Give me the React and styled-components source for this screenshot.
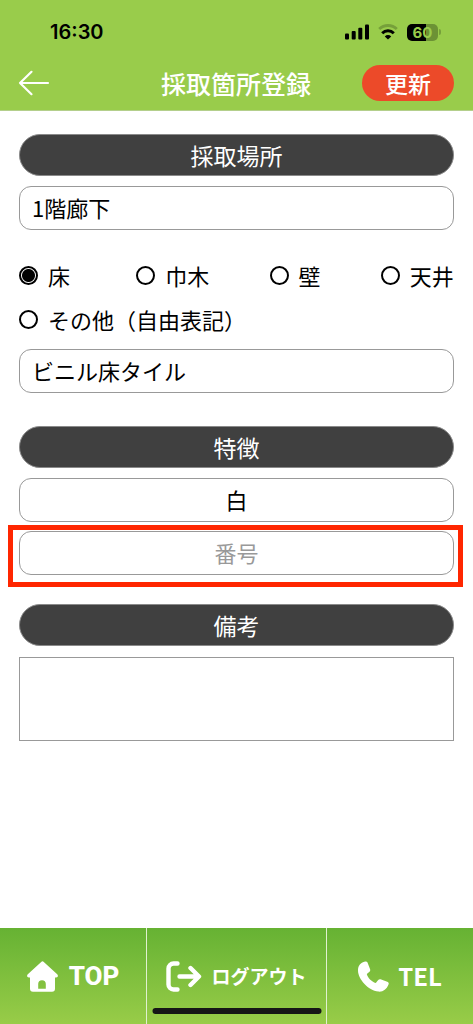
import React, { useState } from "react";
import styled, { createGlobalStyle } from "styled-components";

const PLACES = ["床", "巾木", "壁", "天井"];
const OTHER = "その他（自由表記）";

const StatusBar = () => (
  <StatusRow>
    <Clock>16:30</Clock>
    <StatusIcons>
      <svg width="24" height="16" viewBox="0 0 24 16" aria-hidden="true">
        <rect x="0" y="9.5" width="4" height="6" rx="1" />
        <rect x="6.7" y="7" width="4" height="8.5" rx="1" />
        <rect x="13.3" y="3.7" width="4" height="11.8" rx="1" />
        <rect x="20" y="0.4" width="4" height="15.1" rx="1" />
      </svg>
      <svg width="20" height="16" viewBox="0 0 20 16" aria-hidden="true">
        <path
          d="M1.2 5.1a12.6 12.6 0 0 1 17.6 0"
          fill="none"
          stroke="#76a03a"
          strokeWidth="2.8"
        />
        <path
          d="M4.2 9.2a8.3 8.3 0 0 1 11.6 0"
          fill="none"
          stroke="#000"
          strokeWidth="3"
        />
        <path d="M10 15.6 6.8 12.4a4.6 4.6 0 0 1 6.4 0z" />
      </svg>
      <BatteryWrap>
        <Battery>60</Battery>
        <BatteryTip />
      </BatteryWrap>
    </StatusIcons>
  </StatusRow>
);

const App = () => {
  const [place, setPlace] = useState("床");

  return (
    <Page>
      <GlobalStyle />
      <Header>
        <StatusBar />
        <NavRow>
          <BackButton type="button" aria-label="戻る">
            <svg width="32" height="26" viewBox="0 0 32 26" aria-hidden="true">
              <path
                d="M30 13H2M13.5 1.8 2 13l11.5 11.2"
                fill="none"
                stroke="#fff"
                strokeWidth="2.2"
                strokeLinecap="round"
                strokeLinejoin="round"
              />
            </svg>
          </BackButton>
          <Title>採取箇所登録</Title>
          <UpdateButton type="submit" form="place-form">
            更新
          </UpdateButton>
        </NavRow>
      </Header>

      <Form id="place-form" onSubmit={(e) => e.preventDefault()}>
        <Section>
          <Heading>採取場所</Heading>
          <TextInput aria-label="採取場所" defaultValue="1階廊下" />
          <Options role="radiogroup" aria-label="部位">
            {PLACES.map((name) => (
              <Option key={name}>
                <Radio
                  name="place"
                  checked={place === name}
                  onChange={() => setPlace(name)}
                />
                {name}
              </Option>
            ))}
            <Option $wide>
              <Radio
                name="place"
                checked={place === OTHER}
                onChange={() => setPlace(OTHER)}
              />
              {OTHER}
            </Option>
          </Options>
          <TextInput aria-label="自由表記" defaultValue="ビニル床タイル" />
        </Section>

        <Section>
          <Heading>特徴</Heading>
          <FieldGroup>
            <TextInput $center aria-label="特徴" defaultValue="白" />
            <Highlight>
              <TextInput $center aria-label="番号" placeholder="番号" />
            </Highlight>
          </FieldGroup>
        </Section>

        <NoteSection>
          <Heading as="label" htmlFor="note">
            備考
          </Heading>
          <NoteArea id="note" />
        </NoteSection>
      </Form>

      <Footer>
        <TopLink href="#top">
          <svg width="31" height="31" viewBox="0 0 31 31" aria-hidden="true">
            <path
              fill="#fff"
              fillRule="evenodd"
              d="M14.2.9a2 2 0 0 1 2.6 0L30.2 13.2c1.3 1.3.7 3.2-1.1 3.2H28v11.4a3 3 0 0 1-3 3H6a3 3 0 0 1-3-3V16.4H1.9C.1 16.4-.5 14.5.8 13.2zM11.2 27.8h7.6v-4.800a3.800 3.800 0 0 0-7.600 0z"
            />
          </svg>
          TOP
        </TopLink>
        <FooterItem as="button" type="button" $size={19}>
          <svg width="36" height="31" viewBox="0 0 36 31" aria-hidden="true">
            <path
              d="M11.5 2.5H7.5a5 5 0 0 0-5 5v16a5 5 0 0 0 5 5h4M13.5 15.5h18M24.5 7l8.5 8.5-8.5 8.5"
              fill="none"
              stroke="#fff"
              strokeWidth="4.4"
              strokeLinecap="round"
              strokeLinejoin="round"
            />
          </svg>
          ログアウト
        </FooterItem>
        <FooterItem href="#tel" $size={24}>
          <svg width="31" height="31" viewBox="0 0 31 31" aria-hidden="true">
            <path
              fill="#fff"
              d="M5 1.2C6.5.2 8.700 0 9.500 1.500L12 8c.5 1.300.2 2.200-.8 3L8.800 13c.9 3.700 4.700 7.700 9 9l2-2.600c1-1.200 2-1.500 3.400-1l6 2.300c1.500.6 1.900 1.700 1.200 3.100C28.500 28.500 25 31 20.500 30.600 10 29.500 0 18 0 9.500 0 5 2 2.500 5 1.200z"
            />
          </svg>
          TEL
        </FooterItem>
        <HomeIndicator />
      </Footer>
    </Page>
  );
};

export default App;

const GlobalStyle = createGlobalStyle`
  * {
    box-sizing: border-box;
  }

  body {
    margin: 0;
    background-color: white;
  }

  body, input, button, textarea {
    font-family: "Noto Sans CJK JP", sans-serif;
  }
`;

const Page = styled.div`
  display: flex;
  flex-direction: column;
  min-height: 100vh;
`;

const Header = styled.header`
  background-color: #99cc4b;
  border-bottom: 1px solid #b4cf8c;
  padding-bottom: 8px;
`;

const StatusRow = styled.div`
  display: flex;
  align-items: center;
  justify-content: space-between;
  height: 64px;
  padding: 0 32px 0 50px;
`;

const Clock = styled.div`
  font-family: Inter, sans-serif;
  font-size: 20px;
  font-weight: 600;
`;

const StatusIcons = styled.div`
  display: flex;
  align-items: center;
  gap: 9px;
`;

const BatteryWrap = styled.div`
  display: flex;
  align-items: center;
  gap: 1px;
`;

const Battery = styled.div`
  width: 31px;
  height: 17px;
  border-radius: 5px;
  background: linear-gradient(to right, black 60%, #6c9235 60%);
  color: #99cc4b;
  font-family: Inter, sans-serif;
  font-size: 15px;
  font-weight: 700;
  line-height: 17px;
  text-align: center;
`;

const BatteryTip = styled.div`
  width: 2px;
  height: 6px;
  border-radius: 0 2px 2px 0;
  background-color: #76a03a;
`;

const NavRow = styled.div`
  display: grid;
  grid-template-columns: 1fr auto 1fr;
  align-items: center;
  padding: 0 19px 0 18px;
`;

const BackButton = styled.button`
  display: flex;
  justify-self: start;
  padding: 0;
  border: 0;
  background: none;
`;

const Title = styled.h1`
  margin: 0;
  color: white;
  font-size: 25px;
  font-weight: 500;
  line-height: 38px;
`;

const UpdateButton = styled.button`
  justify-self: end;
  width: 92px;
  height: 36px;
  padding: 0;
  border: 0;
  border-radius: 18px;
  background-color: #ec4a29;
  color: white;
  font-size: 23px;
  font-weight: 500;
  line-height: 36px;
`;

const Form = styled.form`
  display: flex;
  flex: 1;
  flex-direction: column;
  padding: 23px 19px;
`;

const Section = styled.section`
  display: flex;
  flex-direction: column;
  gap: 10px;
  margin-bottom: 33px;
`;

const NoteSection = styled(Section)`
  gap: 11px;
  margin: -4px 0 0;
`;

const Heading = styled.h2`
  margin: 0;
  border: 1px solid #8a8a8a;
  border-radius: 21px;
  background-color: #404040;
  color: white;
  font-size: 23px;
  font-weight: 400;
  line-height: 40px;
  text-align: center;
`;

const TextInput = styled.input`
  display: block;
  width: 100%;
  height: 44px;
  padding: 0 12px 2px;
  border: 1px solid #999;
  border-radius: 12px;
  background-color: white;
  color: black;
  font-size: 22px;
  text-align: ${(props) => (props.$center ? "center" : "left")};

  &::placeholder {
    color: #999;
  }
`;

const Options = styled.div`
  display: grid;
  grid-template-columns: 117fr 133fr 111fr 73fr;
  row-gap: 12px;
  padding: 19px 0 4px;
`;

const Option = styled.label`
  display: flex;
  align-items: center;
  gap: 10px;
  font-size: 22px;
  line-height: 32px;
  white-space: nowrap;
  grid-column: ${(props) => (props.$wide ? "1 / -1" : "auto")};
`;

const Radio = styled.input.attrs({ type: "radio" })`
  appearance: none;
  flex: none;
  width: 19px;
  height: 19px;
  margin: 0;
  border: 2px solid black;
  border-radius: 50%;

  &:checked {
    background: radial-gradient(circle, black 6px, white 7px);
  }
`;

const FieldGroup = styled.div`
  display: flex;
  flex-direction: column;
  gap: 9px;
`;

const Highlight = styled.div`
  position: relative;

  &::after {
    content: "";
    position: absolute;
    inset: -6px -9px -12px -11px;
    border: 5px solid #ff2600;
    pointer-events: none;
  }
`;

const NoteArea = styled.textarea`
  display: block;
  width: 100%;
  height: 84px;
  padding: 8px 12px;
  border: 1px solid #999;
  border-radius: 0;
  font-size: 22px;
  resize: none;
`;

const Footer = styled.footer`
  position: relative;
  display: grid;
  grid-template-columns: 147fr 180fr 146fr;
  height: 96px;
  background: linear-gradient(to bottom, #66b233, #98cc48);
`;

const FooterItem = styled.a`
  display: flex;
  align-items: center;
  justify-content: center;
  gap: 9px;
  padding: 0;
  border: 0;
  border-right: 1px solid #e0f0d0;
  background: none;
  color: white;
  font-size: ${(props) => props.$size}px;
  font-weight: 700;
  line-height: 32px;
  text-decoration: none;

  &:nth-child(3) {
    border-right: 0;
  }
`;

const TopLink = styled(FooterItem)`
  gap: 11px;
  font-family: Roboto, sans-serif;
  font-size: 26px;
  font-weight: 800;
`;

const HomeIndicator = styled.div`
  position: absolute;
  bottom: 10px;
  left: 50%;
  width: 169px;
  height: 6px;
  border-radius: 3px;
  background-color: #161616;
  transform: translateX(-50%);
`;
